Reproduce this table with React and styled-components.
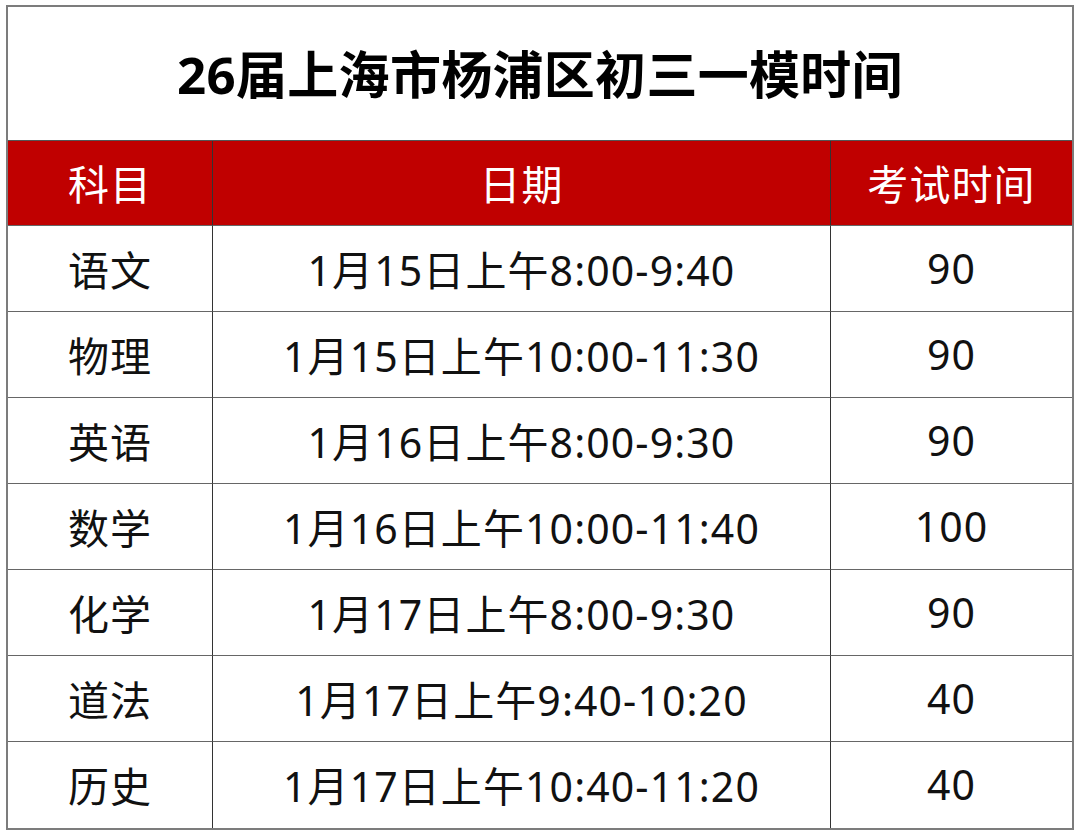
import React from "react";
import styled, { createGlobalStyle } from "styled-components";

const Global = createGlobalStyle`
  html, body { margin: 0; padding: 0; background: #ffffff; }
  body { font-family: "Noto Sans", "Noto Sans CJK SC", sans-serif; }
`;

const Page = styled.div`
  width: 1080px;
  height: 835px;
  padding: 5px 6px;
  box-sizing: border-box;
  background: #fff;
`;

const Table = styled.div`
  display: grid;
  grid-template-columns: 205px 618px 1fr;
  grid-template-rows: 134px 85px repeat(7, 86px);
  width: 1068px;
  border: 2px solid #7c7c7c;
  box-sizing: border-box;
`;

const Title = styled.div`
  grid-column: 1 / -1;
  display: flex;
  align-items: center;
  justify-content: center;
  padding-bottom: 4px;
  box-sizing: border-box;
  font-family: "Noto Sans", "Noto Sans CJK SC", sans-serif;
  font-size: 51px;
  font-weight: 700;
  letter-spacing: 0.3px;
  color: #000;
  border-bottom: 1px solid #555;
`;

const Cell = styled.div`
  display: flex;
  align-items: center;
  justify-content: center;
  padding-bottom: 2px;
  font-family: "Noto Sans", "Noto Sans CJK SC", sans-serif;
  font-size: 41px;
  letter-spacing: 1.1px;
  color: ${(p) => (p.$head ? "#fff" : "#111")};
  background: ${(p) => (p.$head ? "#c00000" : "#fff")};
  border-right: ${(p) => (p.$last ? "none" : "1px solid #333")};
  border-bottom: ${(p) => (p.$bottom ? "none" : "1px solid #666")};
  box-sizing: border-box;
  white-space: nowrap;
`;

const rows = [
  ["语文", "1月15日上午8:00-9:40", "90"],
  ["物理", "1月15日上午10:00-11:30", "90"],
  ["英语", "1月16日上午8:00-9:30", "90"],
  ["数学", "1月16日上午10:00-11:40", "100"],
  ["化学", "1月17日上午8:00-9:30", "90"],
  ["道法", "1月17日上午9:40-10:20", "40"],
  ["历史", "1月17日上午10:40-11:20", "40"],
];

export default function App() {
  return (
    <Page>
      <Global />
      <Table>
        <Title>26届上海市杨浦区初三一模时间</Title>
        {["科目", "日期", "考试时间"].map((h, i) => (
          <Cell key={h} $head $last={i === 2}>
            {h}
          </Cell>
        ))}
        {rows.map((r, ri) =>
          r.map((c, ci) => (
            <Cell
              key={ri + "-" + ci}
              $last={ci === 2}
              $bottom={ri === rows.length - 1}
            >
              {c}
            </Cell>
          ))
        )}
      </Table>
    </Page>
  );
}
